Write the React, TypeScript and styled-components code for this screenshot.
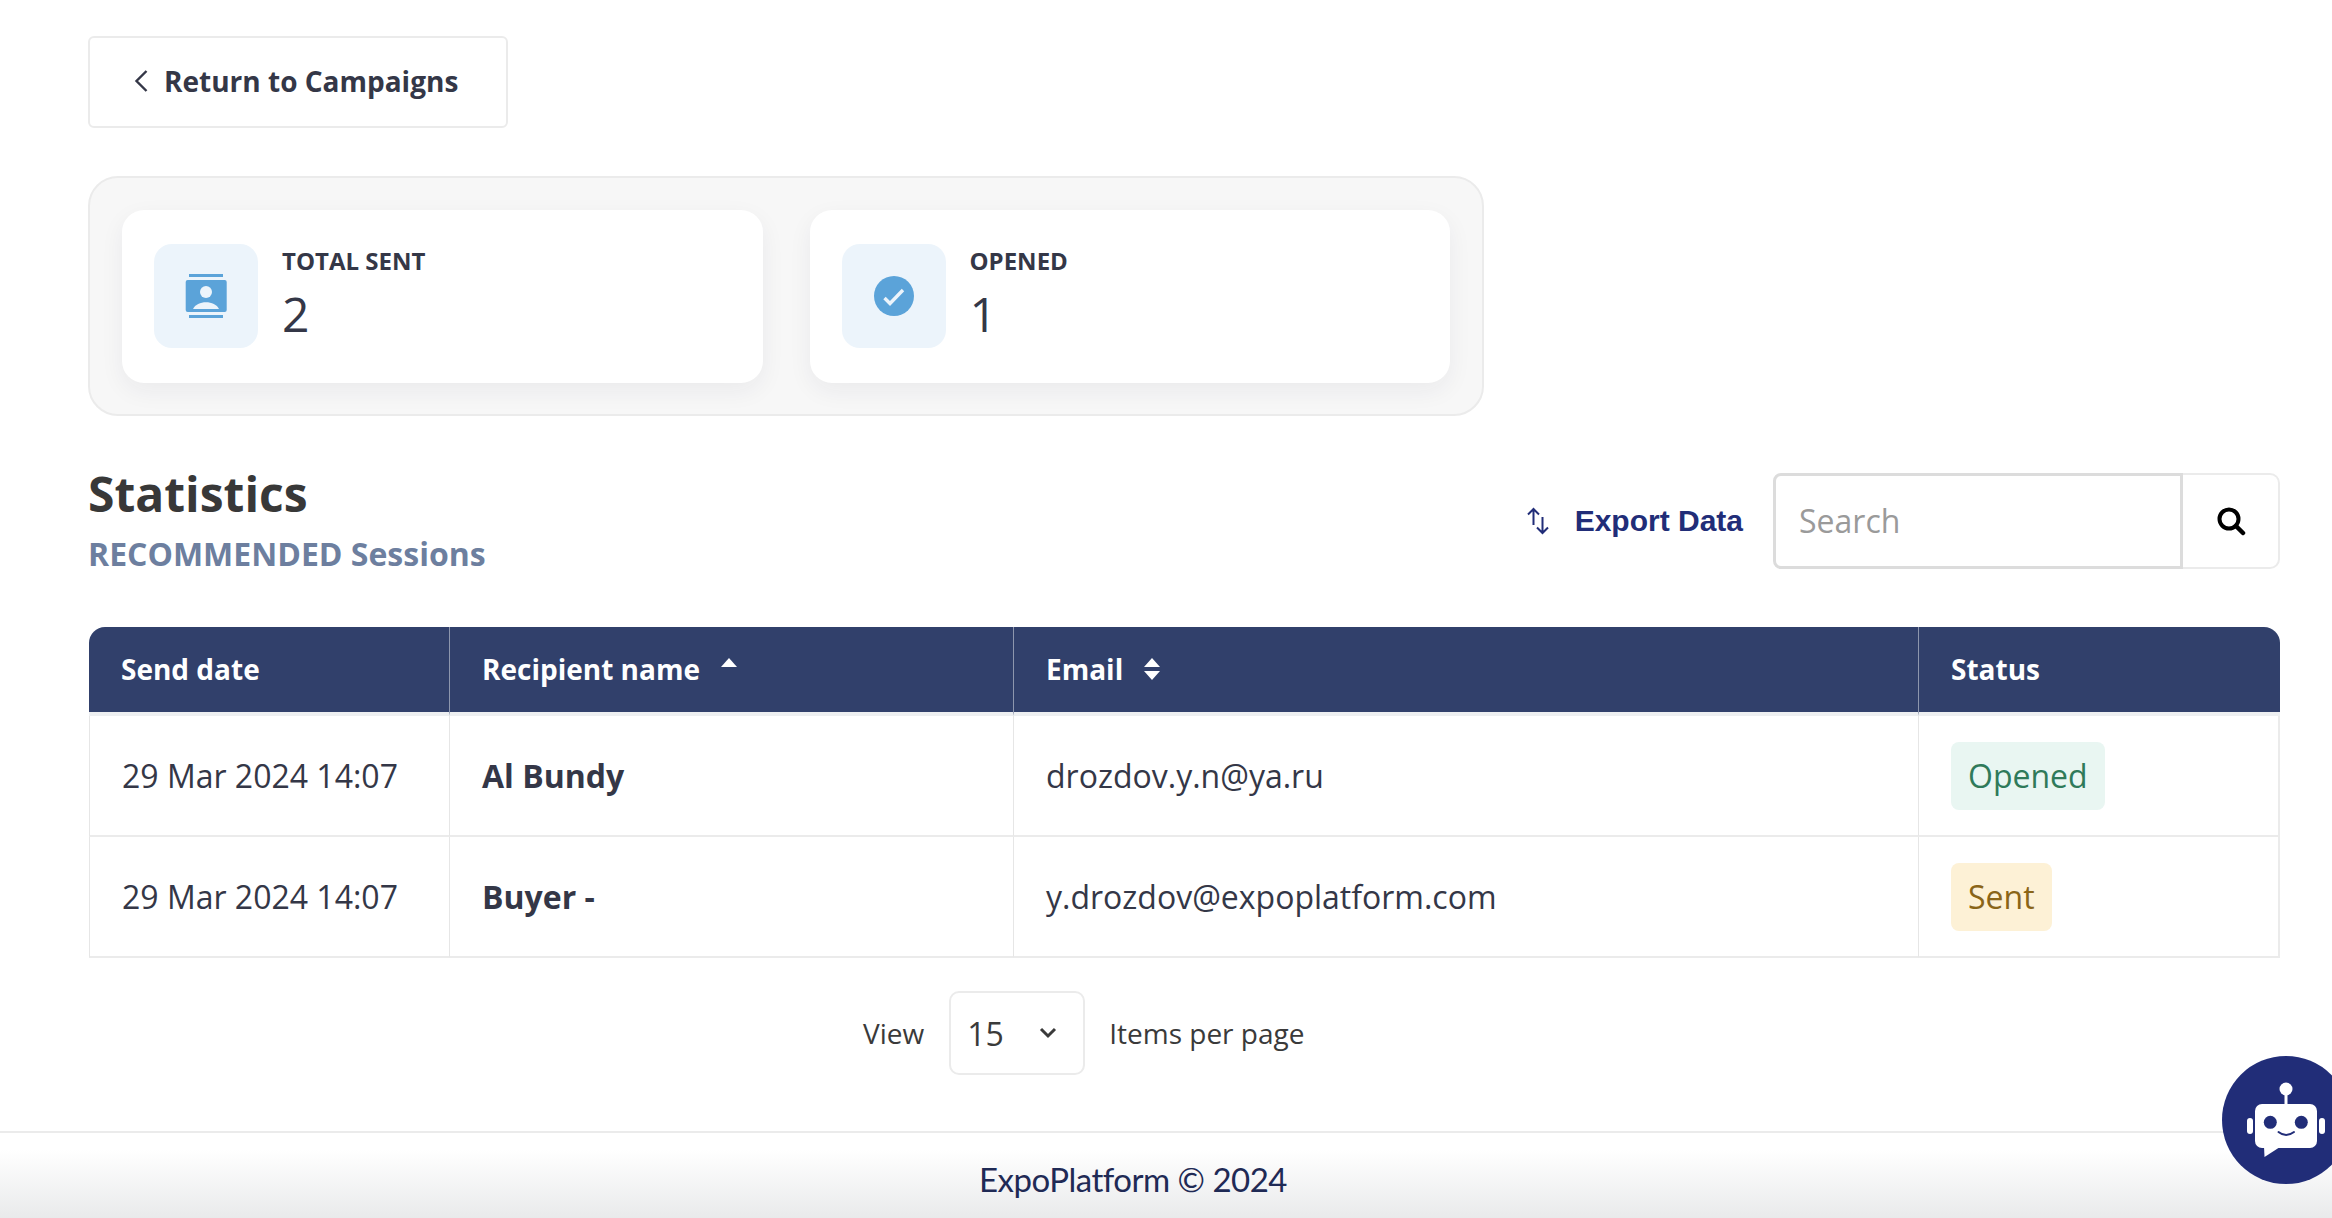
import React from "react";
import styled, { createGlobalStyle } from "styled-components";

const GlobalStyle = createGlobalStyle`
  html, body {
    margin: 0;
    padding: 0;
    background: #fff;
    overflow: hidden;
  }
  * {
    box-sizing: border-box;
  }
`;

const Page = styled.div`
  height: 1218px;
  display: flex;
  flex-direction: column;
  font-family: "Open Sans", sans-serif;
  color: #343747;
`;

const Content = styled.main`
  flex: 1;
  padding: 36px 52px 0 88px;
`;

const BackButton = styled.button`
  width: 420px;
  height: 92px;
  display: flex;
  align-items: center;
  gap: 16px;
  padding: 0 0 2px 44px;
  background: #fff;
  border: 2px solid #ebebeb;
  border-radius: 6px;
  font-family: inherit;
  font-size: 28px;
  font-weight: 700;
  color: #343747;
`;

const StatsPanel = styled.section`
  width: 1396px;
  height: 240px;
  margin-top: 48px;
  padding: 32px 32px 0;
  display: flex;
  gap: 47px;
  background: #f7f7f7;
  border: 2px solid #ebebeb;
  border-radius: 30px;
`;

const StatCard = styled.div`
  width: 641px;
  height: 173px;
  padding: 34px 32px;
  display: flex;
  gap: 24px;
  background: #fff;
  border-radius: 22px;
  box-shadow: 0 8px 24px rgba(30, 40, 60, 0.06);
`;

const StatIcon = styled.div`
  width: 104px;
  height: 104px;
  display: flex;
  align-items: center;
  justify-content: center;
  flex: none;
  background: #ecf4fb;
  border-radius: 18px;
`;

const StatText = styled.div`
  display: flex;
  flex-direction: column;
`;

const StatLabel = styled.div`
  margin-top: 1px;
  font-size: 24px;
  line-height: 32px;
  font-weight: 700;
  color: #343747;
`;

const StatValue = styled.div`
  font-size: 48px;
  line-height: 60px;
  margin-top: 7px;
  color: #343747;
`;

const TableHead = styled.div`
  height: 211px;
  display: flex;
  justify-content: space-between;
  padding-top: 48px;
`;

const Titles = styled.div`
  display: flex;
  flex-direction: column;
`;

const Title = styled.h1`
  margin: 0;
  font-size: 48px;
  line-height: 60px;
  font-weight: 700;
  color: #383838;
`;

const Subtitle = styled.div`
  font-size: 32px;
  line-height: 44px;
  font-weight: 700;
  color: #6d7f9f;
  margin-top: 8px;
`;

const Tools = styled.div`
  display: flex;
  align-items: flex-start;
  padding-top: 9px;
`;

const ExportLink = styled.a`
  height: 96px;
  display: flex;
  align-items: center;
  gap: 26px;
  margin-right: 30px;
  font-family: "Liberation Sans", Arial, sans-serif;
  font-size: 30px;
  font-weight: 700;
  color: #212d78;
`;

const SearchBox = styled.div`
  width: 410px;
  height: 96px;
  display: flex;
  align-items: center;
  padding: 0 0 2px 23px;
  border: 3px solid #dcdcdc;
  border-radius: 8px 0 0 8px;
  font-size: 32px;
  color: #9a9a9a;
`;

const SearchButton = styled.button`
  width: 97px;
  height: 96px;
  display: flex;
  align-items: center;
  justify-content: center;
  padding: 0;
  background: #fff;
  border: 2px solid #ebebeb;
  border-left: none;
  border-radius: 0 10px 10px 0;
`;

const Table = styled.table`
  width: 2191px;
  margin-left: 1px;
  table-layout: fixed;
  border-collapse: separate;
  border-spacing: 0;
`;

const HeadCell = styled.th`
  height: 89px;
  padding: 0 32px 2px;
  background: #31406b;
  border-right: 1px solid #8d96ad;
  border-bottom: 4px solid #edeff1;
  text-align: left;
  vertical-align: middle;
  font-size: 28px;
  font-weight: 700;
  color: #fff;

  &:first-child {
    border-top-left-radius: 16px;
  }
  &:last-child {
    border-top-right-radius: 16px;
    border-right: none;
  }
`;

const HeadLabel = styled.span`
  display: inline-flex;
  align-items: center;
  gap: 20px;
`;

const Cell = styled.td`
  height: 121px;
  padding: 0 32px;
  background: #fff;
  border-right: 1px solid #e6e6e6;
  border-bottom: 2px solid #ebebeb;
  font-size: 32px;
  color: #343747;

  &:first-child {
    border-left: 1px solid #e6e6e6;
  }
  &:last-child {
    border-right: 2px solid #ebebeb;
  }
`;

const NameCell = styled(Cell)`
  font-weight: 700;
`;

const StatusBadge = styled.span<{ $kind: "opened" | "sent" }>`
  display: inline-flex;
  align-items: center;
  height: 68px;
  padding: 0 17px;
  border-radius: 8px;
  background: ${(p) => (p.$kind === "opened" ? "#e9f6f2" : "#fdf1d6")};
  color: ${(p) => (p.$kind === "opened" ? "#2f7a5a" : "#8a6518")};
`;

const Pager = styled.div`
  display: flex;
  align-items: center;
  margin-top: 33px;
  padding-left: 775px;
  font-size: 28px;
  color: #3a3a3a;
`;

const PageSelect = styled.div`
  width: 136px;
  height: 84px;
  display: flex;
  align-items: center;
  justify-content: space-between;
  margin: 0 24px 0 25px;
  padding: 0 26px 0 16px;
  border: 2px solid #ebebeb;
  border-radius: 10px;
  font-size: 32px;
`;

const Footer = styled.footer`
  height: 87px;
  display: flex;
  align-items: center;
  justify-content: center;
  padding: 7px 66px 0 0;
  border-top: 2px solid #ebebeb;
  background: linear-gradient(#fff 20%, #e9eaeb);
  font-family: Lato, sans-serif;
  font-size: 33px;
  letter-spacing: -0.5px;
  color: #1f2a55;
`;

const ChatBubble = styled.div`
  position: fixed;
  left: 2222px;
  top: 1056px;
  width: 128px;
  height: 128px;
  border-radius: 50%;
  background: #212d78;
`;

const Person = () => (
  <svg width="42" height="44" viewBox="0 0 42 44">
    <rect x="4" y="0" width="34" height="3" fill="#5ba3d9" />
    <rect x="0.7" y="6" width="41" height="32" rx="2" fill="#5ba3d9" />
    <rect x="4" y="41" width="34" height="3" fill="#5ba3d9" />
    <circle cx="21" cy="18" r="6" fill="#ecf4fb" />
    <path d="M8 35 C12 26 30 26 34 35 Z" fill="#ecf4fb" />
  </svg>
);

const Check = () => (
  <svg width="40" height="40" viewBox="0 0 40 40">
    <circle cx="20" cy="20" r="20" fill="#5ba3d9" />
    <path d="M10.5 22 L16 27.5 L29 14" fill="none" stroke="#ecf4fb" strokeWidth="3.4" />
  </svg>
);

const ChevronLeft = () => (
  <svg width="14" height="24" viewBox="0 0 14 24">
    <path d="M12.5 2 L2.5 12 L12.5 22" fill="none" stroke="#343747" strokeWidth="2.4" />
  </svg>
);

const ExportArrows = () => (
  <svg width="22" height="28" viewBox="0 0 22 28">
    <path d="M6.5 18 V2 M1 7.5 L6.5 2 L12 7.5" fill="none" stroke="#212d78" strokeWidth="2" />
    <path d="M15.5 10 V26 M10 20.5 L15.5 26 L21 20.5" fill="none" stroke="#212d78" strokeWidth="2" />
  </svg>
);

const SearchGlyph = () => (
  <svg width="30" height="30" viewBox="0 0 30 30">
    <circle cx="13" cy="13" r="9.5" fill="none" stroke="#000" strokeWidth="4" />
    <path d="M20 20 L27 27" stroke="#000" strokeWidth="4.5" strokeLinecap="round" />
  </svg>
);

const SortUp = () => (
  <svg width="18" height="10" viewBox="0 0 18 10" style={{ marginBottom: 14 }}>
    <path d="M1 10 L9 1 L17 10 Z" fill="#fff" />
  </svg>
);

const SortBoth = () => (
  <svg width="18" height="24" viewBox="0 0 18 24">
    <path d="M1 10 L9 1 L17 10 Z M1 14 L9 23 L17 14 Z" fill="#fff" />
  </svg>
);

const SelectChevron = () => (
  <svg width="18" height="12" viewBox="0 0 18 12">
    <path d="M2 2 L9 9 L16 2" fill="none" stroke="#3a3a3a" strokeWidth="3" />
  </svg>
);

const Robot = () => (
  <svg width="128" height="128" viewBox="0 0 128 128">
    <rect x="25" y="62" width="6" height="16" rx="3" fill="#fff" />
    <rect x="97" y="62" width="6" height="16" rx="3" fill="#fff" />
    <circle cx="64" cy="33" r="6.5" fill="#fff" />
    <rect x="62.5" y="38" width="3" height="11" fill="#fff" />
    <rect x="33" y="48" width="62" height="44" rx="7" fill="#fff" />
    <path d="M42 90 L42.5 101 L58 91 Z" fill="#fff" />
    <circle cx="48.3" cy="66.3" r="6.5" fill="#212d78" />
    <circle cx="79.3" cy="66.3" r="6.5" fill="#212d78" />
    <path d="M56.5 76 Q64 82 72 76" fill="none" stroke="#212d78" strokeWidth="2" strokeLinecap="round" />
  </svg>
);

const rows = [
  { date: "29 Mar 2024 14:07", name: "Al Bundy", email: "drozdov.y.n@ya.ru", status: "Opened", kind: "opened" as const },
  { date: "29 Mar 2024 14:07", name: "Buyer -", email: "y.drozdov@expoplatform.com", status: "Sent", kind: "sent" as const },
];

const App = () => {
  return (
    <Page>
      <GlobalStyle />
      <Content>
        <BackButton>
          <ChevronLeft />
          Return to Campaigns
        </BackButton>

        <StatsPanel>
          <StatCard>
            <StatIcon>
              <Person />
            </StatIcon>
            <StatText>
              <StatLabel>TOTAL SENT</StatLabel>
              <StatValue>2</StatValue>
            </StatText>
          </StatCard>
          <StatCard>
            <StatIcon>
              <Check />
            </StatIcon>
            <StatText>
              <StatLabel>OPENED</StatLabel>
              <StatValue>1</StatValue>
            </StatText>
          </StatCard>
        </StatsPanel>

        <TableHead>
          <Titles>
            <Title>Statistics</Title>
            <Subtitle>RECOMMENDED Sessions</Subtitle>
          </Titles>
          <Tools>
            <ExportLink>
              <ExportArrows />
              Export Data
            </ExportLink>
            <SearchBox>Search</SearchBox>
            <SearchButton>
              <SearchGlyph />
            </SearchButton>
          </Tools>
        </TableHead>

        <Table>
          <colgroup>
            <col style={{ width: 361 }} />
            <col style={{ width: 564 }} />
            <col style={{ width: 905 }} />
            <col style={{ width: 361 }} />
          </colgroup>
          <thead>
            <tr>
              <HeadCell>Send date</HeadCell>
              <HeadCell>
                <HeadLabel>
                  Recipient name
                  <SortUp />
                </HeadLabel>
              </HeadCell>
              <HeadCell>
                <HeadLabel>
                  Email
                  <SortBoth />
                </HeadLabel>
              </HeadCell>
              <HeadCell>Status</HeadCell>
            </tr>
          </thead>
          <tbody>
            {rows.map((row) => (
              <tr key={row.email}>
                <Cell>{row.date}</Cell>
                <NameCell>{row.name}</NameCell>
                <Cell>{row.email}</Cell>
                <Cell>
                  <StatusBadge $kind={row.kind}>{row.status}</StatusBadge>
                </Cell>
              </tr>
            ))}
          </tbody>
        </Table>

        <Pager>
          View
          <PageSelect>
            15
            <SelectChevron />
          </PageSelect>
          Items per page
        </Pager>
      </Content>

      <Footer>ExpoPlatform © 2024</Footer>

      <ChatBubble>
        <Robot />
      </ChatBubble>
    </Page>
  );
};

export default App;
